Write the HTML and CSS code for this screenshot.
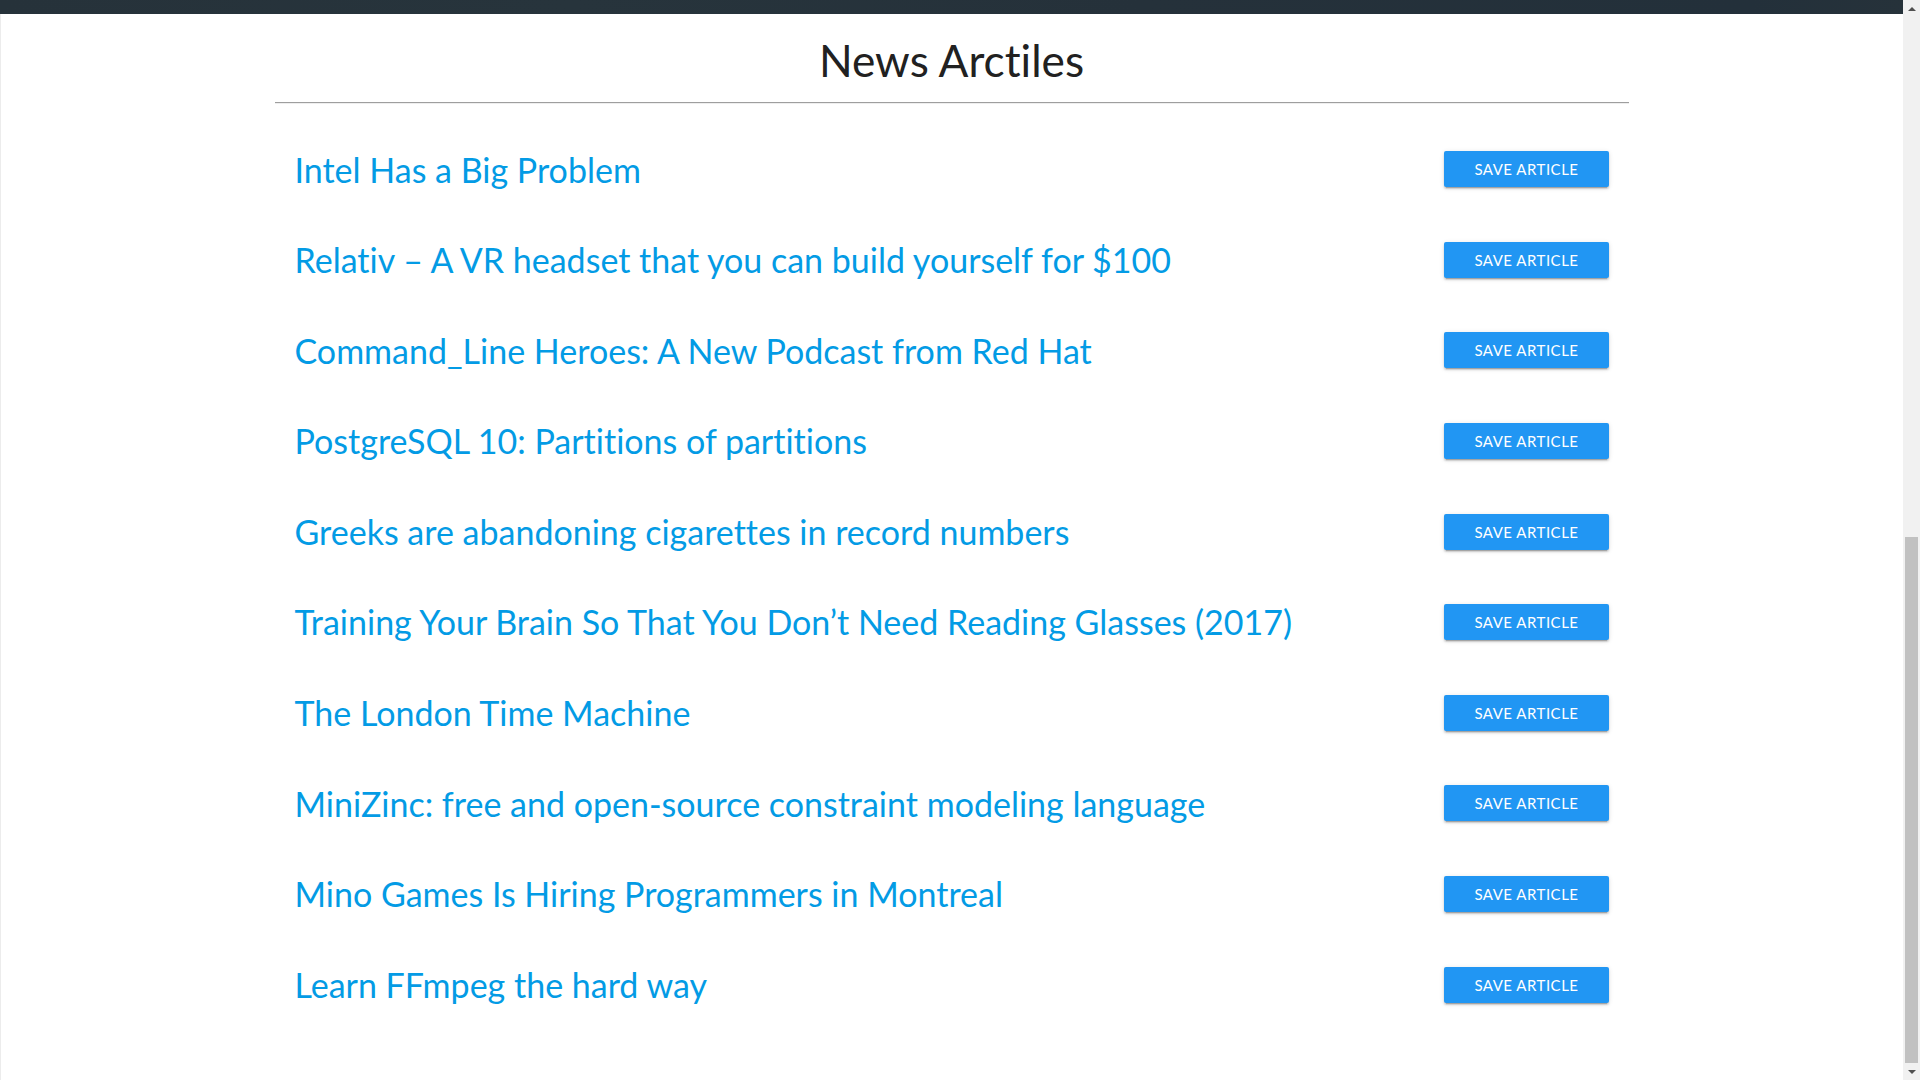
FILE: index.html
```html
<!DOCTYPE html>
<html lang="en">
<head>
<meta charset="utf-8">
<title>News Arctiles</title>
<link rel="stylesheet" href="styles.css">
</head>
<body>
  <main class="page">
    <div class="hero-edge"></div>
    <section class="content">
      <h3 class="page-title">News Arctiles</h3>
      <hr class="divider">
      <ul class="articles">
        <li class="article"><a class="article-title" href="#">Intel Has a Big Problem</a><button class="btn">Save Article</button></li>
        <li class="article"><a class="article-title" href="#">Relativ – A VR headset that you can build yourself for $100</a><button class="btn">Save Article</button></li>
        <li class="article"><a class="article-title" href="#">Command_Line Heroes: A New Podcast from Red Hat</a><button class="btn">Save Article</button></li>
        <li class="article"><a class="article-title" href="#">PostgreSQL 10: Partitions of partitions</a><button class="btn">Save Article</button></li>
        <li class="article"><a class="article-title" href="#">Greeks are abandoning cigarettes in record numbers</a><button class="btn">Save Article</button></li>
        <li class="article"><a class="article-title" href="#">Training Your Brain So That You Don’t Need Reading Glasses (2017)</a><button class="btn">Save Article</button></li>
        <li class="article"><a class="article-title" href="#">The London Time Machine</a><button class="btn">Save Article</button></li>
        <li class="article"><a class="article-title" href="#">MiniZinc: free and open-source constraint modeling language</a><button class="btn">Save Article</button></li>
        <li class="article"><a class="article-title" href="#">Mino Games Is Hiring Programmers in Montreal</a><button class="btn">Save Article</button></li>
        <li class="article"><a class="article-title" href="#">Learn FFmpeg the hard way</a><button class="btn">Save Article</button></li>
      </ul>
    </section>
  </main>
  <div class="scrollbar" aria-hidden="true">
    <div class="sb-arrow"><span class="tri-up"></span></div>
    <div class="sb-track"><div class="sb-thumb"></div></div>
    <div class="sb-arrow"><span class="tri-down"></span></div>
  </div>
</body>
</html>
```
FILE: styles.css
```css
html, body {
  margin: 0;
  height: 100%;
  overflow: hidden;
}

body {
  display: flex;
  font-family: Lato, "Noto Sans", "Liberation Sans", sans-serif;
  font-variant-ligatures: no-common-ligatures;
  background: #fff;
  color: rgba(0, 0, 0, 0.87);
}

.page {
  flex: 1;
  display: flex;
  flex-direction: column;
  background: #fff;
  box-shadow: inset 1px 0 0 #ececec;
}

.hero-edge {
  height: 14px;
  flex: none;
  background: linear-gradient(90deg, #26323a 0%, #27343c 30%, #25313a 60%, #23303a 92%, #26323a 100%);
}

.content {
  width: 1354px;
  margin: 0 auto;
}

.page-title {
  margin: 21.5px 0 17.5px;
  font-size: 44.2px;
  font-weight: 400;
  line-height: 1.1;
  text-align: center;
  color: #212121;
}

.divider {
  margin: 0;
  height: 0;
  border: 0;
  border-top: 1px solid #9e9e9e;
  border-bottom: 1px solid #eeeeee;
}

.articles {
  list-style: none;
  margin: 20.3px 0 0;
  padding: 0;
}

.article {
  height: 90.6px;
  display: flex;
  align-items: center;
  justify-content: space-between;
  padding: 0 20px 0 20px;
}

.article-title {
  font-size: 34px;
  line-height: 1.1;
  color: #039be5;
  text-decoration: none;
}

.btn {
  flex: none;
  height: 36px;
  line-height: 36px;
  padding: 0 30px;
  border: none;
  border-radius: 2px;
  background: #2196f3;
  color: #fff;
  font-family: Lato, "Noto Sans", sans-serif;
  font-size: 15px;
  letter-spacing: 0.5px;
  text-transform: uppercase;
  box-shadow: 0 2px 2px 0 rgba(0, 0, 0, 0.14), 0 1px 5px 0 rgba(0, 0, 0, 0.12), 0 3px 1px -2px rgba(0, 0, 0, 0.2);
  cursor: pointer;
}

/* scrollbar column */
.scrollbar {
  width: 17px;
  flex: none;
  display: flex;
  flex-direction: column;
  background: #f1f1f1;
}

.sb-arrow {
  height: 17px;
  flex: none;
  display: flex;
  align-items: center;
  justify-content: center;
}

.tri-up, .tri-down {
  width: 0;
  height: 0;
  border-left: 4px solid transparent;
  border-right: 4px solid transparent;
}

.tri-up { border-bottom: 4px solid #505050; }
.tri-down { border-top: 4px solid #505050; }

.sb-track {
  flex: 1;
  display: flex;
  flex-direction: column;
  justify-content: flex-end;
}

.sb-thumb {
  height: 526px;
  margin: 0 2px;
  background: #c1c1c1;
}
```
